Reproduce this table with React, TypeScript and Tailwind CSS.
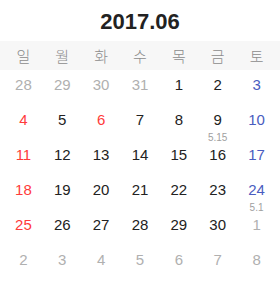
type Day = {
  n: number
  tone: 'muted' | 'sun' | 'sat' | 'plain' | 'holiday'
  lunar?: string
}

const weekdays = ['일', '월', '화', '수', '목', '금', '토']

function buildWeeks(): Day[][] {
  const days: Day[] = []
  for (const n of [28, 29, 30, 31]) days.push({ n, tone: 'muted' })
  for (let n = 1; n <= 30; n++) {
    const col = days.length % 7
    let tone: Day['tone'] = 'plain'
    if (col === 0) tone = 'sun'
    else if (col === 6) tone = 'sat'
    if (n === 6) tone = 'holiday'
    const day: Day = { n, tone }
    if (n === 9) day.lunar = '5.15'
    if (n === 24) day.lunar = '5.1'
    days.push(day)
  }
  let next = 1
  while (days.length < 42) days.push({ n: next++, tone: 'muted' })
  const weeks: Day[][] = []
  for (let i = 0; i < days.length; i += 7) weeks.push(days.slice(i, i + 7))
  return weeks
}

const toneClass: Record<Day['tone'], string> = {
  muted: 'text-[#b0b0b0]',
  sun: 'text-[#ff3b3b]',
  holiday: 'text-[#ff3b3b]',
  sat: 'text-[#4a5cc0]',
  plain: 'text-[#222222]',
}

export default function App() {
  const weeks = buildWeeks()

  return (
    <div className="w-[280px] h-[294px] bg-white font-['Liberation_Sans','Noto_Sans_CJK_KR',sans-serif]">
      <div className="h-[41px] pt-[3px] text-center text-[22px] leading-[38px] font-bold text-[#222222]">
        2017.06
      </div>

      {/* weekday band */}
      <div className="h-[29px] bg-[#f7f7f7]">
        <div className="grid grid-cols-7 px-[4px]">
          {weekdays.map((w) => (
            <div
              key={w}
              className="text-center text-[15px] leading-[29px] text-[#8c8c8c] font-['Noto_Sans_CJK_KR',sans-serif] font-light"
            >
              {w}
            </div>
          ))}
        </div>
      </div>

      <div className="flex flex-col px-[4px]">
        {weeks.map((week, wi) => (
          <div key={wi} className="grid grid-cols-7">
            {week.map((d, di) => (
              <div key={di} className="relative h-[35px] text-center">
                <div className={`pt-[6px] text-[15px] leading-[18px] ${toneClass[d.tone]}`}>{d.n}</div>
                {d.lunar && (
                  <div className="absolute left-0 right-0 top-[28px] text-[10px] leading-[10px] text-[#a0a0a0]">
                    {d.lunar}
                  </div>
                )}
              </div>
            ))}
          </div>
        ))}
      </div>
    </div>
  )
}
